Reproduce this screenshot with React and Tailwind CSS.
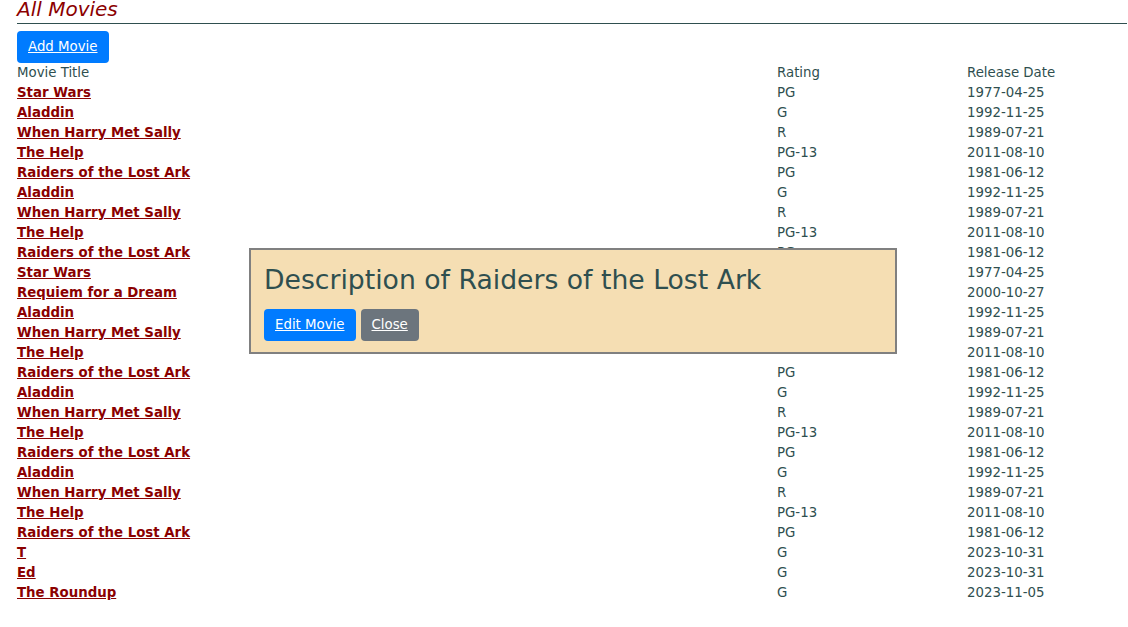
import React from 'react'

const movies = [
  ['Star Wars', 'PG', '1977-04-25'],
  ['Aladdin', 'G', '1992-11-25'],
  ['When Harry Met Sally', 'R', '1989-07-21'],
  ['The Help', 'PG-13', '2011-08-10'],
  ['Raiders of the Lost Ark', 'PG', '1981-06-12'],
  ['Aladdin', 'G', '1992-11-25'],
  ['When Harry Met Sally', 'R', '1989-07-21'],
  ['The Help', 'PG-13', '2011-08-10'],
  ['Raiders of the Lost Ark', 'PG', '1981-06-12'],
  ['Star Wars', 'PG', '1977-04-25'],
  ['Requiem for a Dream', 'R', '2000-10-27'],
  ['Aladdin', 'G', '1992-11-25'],
  ['When Harry Met Sally', 'R', '1989-07-21'],
  ['The Help', '', '2011-08-10'],
  ['Raiders of the Lost Ark', 'PG', '1981-06-12'],
  ['Aladdin', 'G', '1992-11-25'],
  ['When Harry Met Sally', 'R', '1989-07-21'],
  ['The Help', 'PG-13', '2011-08-10'],
  ['Raiders of the Lost Ark', 'PG', '1981-06-12'],
  ['Aladdin', 'G', '1992-11-25'],
  ['When Harry Met Sally', 'R', '1989-07-21'],
  ['The Help', 'PG-13', '2011-08-10'],
  ['Raiders of the Lost Ark', 'PG', '1981-06-12'],
  ['T', 'G', '2023-10-31'],
  ['Ed', 'G', '2023-10-31'],
  ['The Roundup', 'G', '2023-11-05'],
]

const App = () => {
  return (
    <div className="relative min-h-[627px] bg-white px-[17px] pr-[1px] font-['DejaVu_Sans',sans-serif] text-[13.33px] leading-[20px] text-[#2f4f4f]">
      {/* Heading */}
      <h2 className="-mt-[1px] text-[20px] italic leading-[20px] text-[#8b0000]">All Movies</h2>
      <hr className="mt-[4px] border-t border-[#2f4f4f]" />

      <button className="mt-[7px] rounded-[4px] bg-[#007bff] px-[11px] py-[6px] leading-[20px] text-white underline">
        Add Movie
      </button>

      {/* Movie table */}
      <div className="grid grid-cols-[760px_190px_1fr]">
        <div>Movie Title</div>
        <div>Rating</div>
        <div>Release Date</div>
        {movies.map((movie, i) => (
          <React.Fragment key={i}>
            <div>
              <a href="#" className="font-bold text-[#8b0000] underline">
                {movie[0]}
              </a>
            </div>
            <div>{movie[1]}</div>
            <div>{movie[2]}</div>
          </React.Fragment>
        ))}
      </div>

      {/* Description popup */}
      <div className="absolute left-[249px] top-[249px] w-[648px] border-2 border-[#808080] bg-[#f5deb3] px-[13px] pb-[11px] pt-[14px]">
        <h3 className="text-[26.67px] leading-[32px] text-[#2f4f4f]">
          Description of Raiders of the Lost Ark
        </h3>
        <div className="mt-[13px] flex gap-[5px]">
          <button className="rounded-[4px] bg-[#007bff] px-[11px] py-[6px] leading-[20px] text-white underline">
            Edit Movie
          </button>
          <button className="rounded-[4px] bg-[#6c757d] px-[11px] py-[6px] leading-[20px] text-white underline">
            Close
          </button>
        </div>
      </div>
    </div>
  )
}

export default App
